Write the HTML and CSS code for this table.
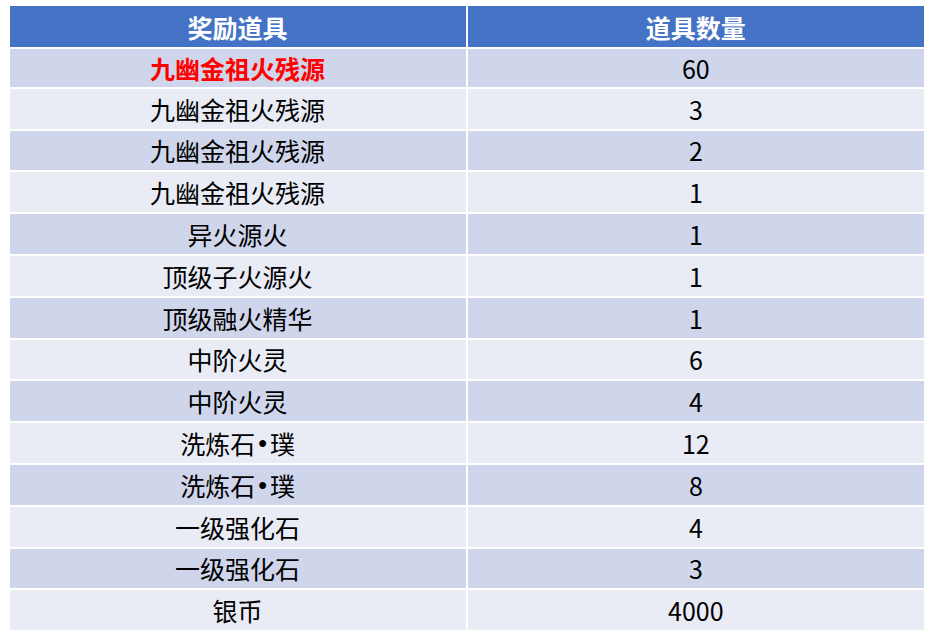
FILE: index.html
```html
<!DOCTYPE html>
<html lang="zh">
<head>
<meta charset="utf-8">
<link rel="stylesheet" href="styles.css">
</head>
<body>
<div class="sheet">
  <div class="table">
    <div class="cell head">奖励道具</div>
    <div class="cell head">道具数量</div>

    <div class="cell odd hot">九幽金祖火残源</div><div class="cell odd">60</div>
    <div class="cell even">九幽金祖火残源</div><div class="cell even">3</div>
    <div class="cell odd">九幽金祖火残源</div><div class="cell odd">2</div>
    <div class="cell even">九幽金祖火残源</div><div class="cell even">1</div>
    <div class="cell odd">异火源火</div><div class="cell odd">1</div>
    <div class="cell even">顶级子火源火</div><div class="cell even">1</div>
    <div class="cell odd">顶级融火精华</div><div class="cell odd">1</div>
    <div class="cell even">中阶火灵</div><div class="cell even">6</div>
    <div class="cell odd">中阶火灵</div><div class="cell odd">4</div>
    <div class="cell even">洗炼石<span class="dot">•</span>璞</div><div class="cell even">12</div>
    <div class="cell odd">洗炼石<span class="dot">•</span>璞</div><div class="cell odd">8</div>
    <div class="cell even">一级强化石</div><div class="cell even">4</div>
    <div class="cell odd">一级强化石</div><div class="cell odd">3</div>
    <div class="cell even">银币</div><div class="cell even">4000</div>
  </div>
</div>
</body>
</html>
```

FILE: styles.css
```css
html, body {
  margin: 0;
  padding: 0;
  background: #ffffff;
}

.sheet {
  padding: 6px 5px 0 9.5px;
  width: 929px;
  box-sizing: border-box;
}

.table {
  width: 914.5px;
  display: grid;
  grid-template-columns: 1fr 1fr;
  grid-template-rows: 39px repeat(14, 39.8px);
  column-gap: 2px;
  row-gap: 2px;
  font-family: "Noto Sans CJK SC", "Noto Sans", sans-serif;
  font-size: 25px;
  color: #000000;
}

.cell {
  display: flex;
  align-items: center;
  justify-content: center;
  line-height: 1;
  padding-top: 1px;
  box-sizing: border-box;
}

.head {
  background: #4472c4;
  color: #ffffff;
  font-weight: 700;
  margin-bottom: -2px;
}

.table > .cell:nth-child(3),
.table > .cell:nth-child(4) {
  margin-top: 2px;
}

.odd {
  background: #cfd5ea;
}

.even {
  background: #e9ebf5;
}

.hot {
  color: #ff0000;
  font-weight: 700;
}

.dot {
  font-family: "Liberation Sans", sans-serif;
  padding: 0 3px;
}
```
